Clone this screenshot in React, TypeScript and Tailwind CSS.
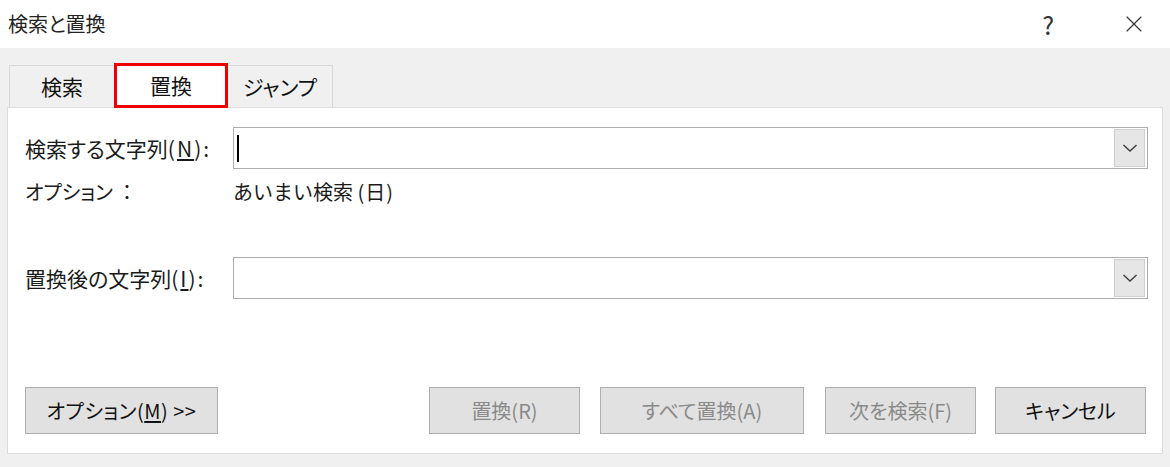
import { X } from 'lucide-react'

const font = { fontFamily: '"Noto Sans CJK JP", "Noto Sans", sans-serif' }

const Chevron = () => (
  <svg width="16" height="10" viewBox="0 0 16 10" fill="none">
    <polyline points="1.5,2 8,8 14.5,2" stroke="#3c3c3c" strokeWidth="1.4" />
  </svg>
)

const Combo = ({ caret = false }: { caret?: boolean }) => {
  return (
    <div className="flex h-[42px] flex-1 items-center border border-[#adadad] bg-white pr-[2px]">
      <div className="flex h-full flex-1 items-center pl-[3px]">
        {caret && <div className="h-[27px] w-[1.5px] bg-black" />}
      </div>
      <div className="flex h-[38px] w-[31px] items-center justify-center border border-[#cfcfcf] bg-[#e6e6e6]">
        <Chevron />
      </div>
    </div>
  )
}

const Btn = ({ label, width, disabled = false, className = '' }: { label: React.ReactNode; width: string; disabled?: boolean; className?: string }) => {
  return (
    <div
      className={`flex h-[47px] items-center justify-center border border-[#adadad] bg-[#e1e1e1] text-[20px] leading-none ${
        disabled ? 'text-[#8a8a8a]' : 'text-[#111]'
      } ${width} ${className}`}
    >
      {label}
    </div>
  )
}

const App = () => {
  return (
    <div className="h-[467px] w-[1170px] overflow-hidden bg-[#f0f0f0] [font-feature-settings:'palt']" style={font}>
      {/* タイトルバー */}
      <div className="flex h-[48px] items-center bg-white pl-[8px]">
        <span className="text-[20px] leading-none text-[#222]">検索と置換</span>
        <span className="ml-auto mr-[66px] text-[25px] leading-none text-[#333]">?</span>
        <X className="mr-[22px] h-[28px] w-[28px] text-[#333]" strokeWidth={1} />
      </div>

      <div className="px-[7px] pt-[15px]">
        {/* タブ */}
        <div className="flex h-[44px] items-end pl-[2px]">
          <div className="flex h-[42px] w-[105px] items-center justify-center border-l border-t border-[#d9d9d9] text-[21px] leading-none text-[#111]">
            検索
          </div>
          <div className="relative z-10 -mb-px flex h-[45px] w-[114px] items-center justify-center border-[3px] border-[#ee0000] bg-white text-[21px] leading-none text-[#111]">
            置換
          </div>
          <div className="flex h-[42px] w-[105px] items-center justify-center border-r border-t border-[#d9d9d9] text-[21px] leading-none text-[#111]">
            ジャンプ
          </div>
        </div>

        {/* パネル */}
        <div className="h-[347px] border border-[#dcdcdc] bg-white pl-[17px] pr-[14px] pt-[19px] text-[20px] leading-none text-[#1a1a1a]">
          <div className="flex h-[42px] items-center">
            <div className="w-[208px] text-[21px]">
              検索する文字列
              <span className="tracking-[2px]">
                (<span className="underline underline-offset-2">N</span>):
              </span>
            </div>
            <Combo caret />
          </div>
          <div className="flex h-[46px] items-center">
            <div className="w-[208px]">オプション&nbsp;&nbsp;：</div>
            <div className="[font-feature-settings:normal]">
              あいまい検索 <span className="tracking-[1px]">(日)</span>
            </div>
          </div>
          <div className="mt-[42px] flex h-[42px] items-center">
            <div className="w-[208px] text-[21px]">
              置換後の文字列
              <span className="tracking-[2px]">
                (<span className="underline underline-offset-2">I</span>):
              </span>
            </div>
            <Combo />
          </div>

          <div className="mt-[88px] flex items-center pr-[2px]">
            <Btn
              width="w-[193px]"
              label={
                <span className="tracking-[0.5px]">
                  オプション(<span className="underline underline-offset-2">M</span>) &gt;&gt;
                </span>
              }
            />
            <Btn width="w-[151px]" className="ml-auto" label="置換(R)" disabled />
            <Btn width="w-[204px]" className="ml-[20px]" label="すべて置換(A)" disabled />
            <Btn width="w-[151px]" className="ml-[21px]" label="次を検索(F)" disabled />
            <Btn width="w-[151px]" className="ml-[19px]" label="キャンセル" />
          </div>
        </div>
      </div>
    </div>
  )
}

export default App
